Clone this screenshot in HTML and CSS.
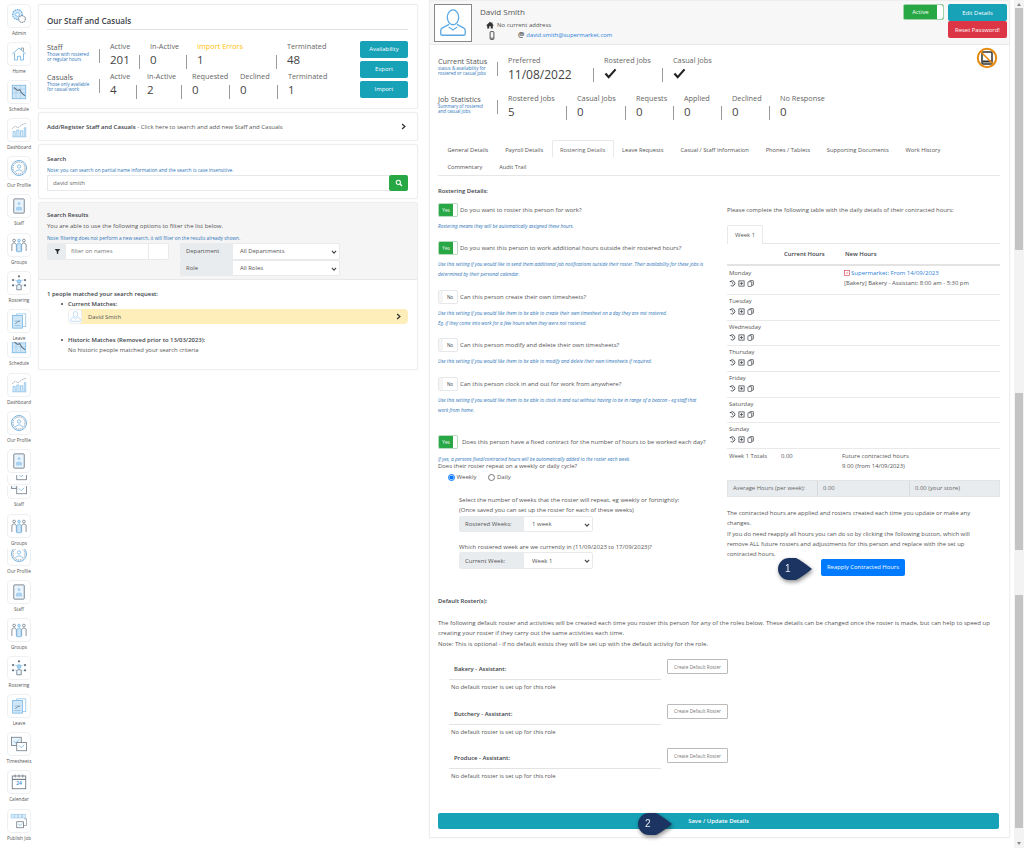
FILE: index.html
```html
<!DOCTYPE html>
<html lang="en">
<head>
<meta charset="utf-8">
<title>Our Staff and Casuals</title>
<link rel="stylesheet" href="styles.css">
</head>
<body>
<svg class="defs" aria-hidden="true">
  <defs>
    <symbol id="i-admin" viewBox="0 0 24 24"><circle cx="10" cy="10" r="6.5" fill="#d5e9f8" stroke="#6fb1e3" stroke-width="1.6" stroke-dasharray="2.4 .8"/><circle cx="10" cy="10" r="2.5" fill="#fff" stroke="#6fb1e3"/><circle cx="16" cy="16" r="4.5" fill="#fff" stroke="#7d8994" stroke-width="1.4" stroke-dasharray="2 .8"/></symbol>
    <symbol id="i-home" viewBox="0 0 24 24"><path d="M3 12 12 4l9 8M6 11v9h4v-5h4v5h4v-9" fill="none" stroke="#6fb1e3" stroke-width="1.1"/><path d="M15 7V4h3v5" fill="none" stroke="#7d8994"/></symbol>
    <symbol id="i-sched" viewBox="0 0 24 24"><rect x="3" y="3" width="18" height="18" fill="#cfe6f7" stroke="#6fb1e3"/><path d="M3 8h18M3 13h18M8 3v18M14 3v18" stroke="#8fc3ea" stroke-width=".6"/><path d="M5 6l5 4 3-1 3 5 4 3" fill="none" stroke="#66727d" stroke-width="1.4"/></symbol>
    <symbol id="i-dash" viewBox="0 0 24 24"><path d="M4 20v-6h3v6M9 20v-8h3v8M14 20v-7h3v7M19 20V9h2v11" fill="#e2f0fb" stroke="#6fb1e3" stroke-width=".8"/><path d="M3 21h19" stroke="#6fb1e3"/><path d="M3 10l4-3 4 2 5-4 5-2" fill="none" stroke="#7d8994" stroke-dasharray="2 1.2"/></symbol>
    <symbol id="i-prof" viewBox="0 0 24 24"><circle cx="12" cy="12" r="10" fill="none" stroke="#6fb1e3" stroke-width="1.3"/><circle cx="12" cy="12" r="8" fill="none" stroke="#7d8994" stroke-dasharray="2 1"/><circle cx="12" cy="10" r="2.2" fill="none" stroke="#6fb1e3"/><path d="M7 17q5-5 10 0" fill="none" stroke="#6fb1e3"/></symbol>
    <symbol id="i-staff" viewBox="0 0 24 24"><rect x="5" y="2.5" width="14" height="19" rx="1" fill="#eaf4fc" stroke="#66727d" stroke-width="1.1"/><circle cx="12" cy="8.5" r="2" fill="#a9d2f1"/><path d="M8 18v-4q4-3 8 0v4z" fill="#a9d2f1"/></symbol>
    <symbol id="i-group" viewBox="0 0 24 24"><g fill="none" stroke="#66727d"><circle cx="5.5" cy="6" r="1.8"/><circle cx="18.5" cy="6" r="1.8"/><path d="M2.500 20v-9l3-2 3 2v9M15.500 20v-9l3-2 3 2v9"/></g><g fill="#cfe6f7" stroke="#6fb1e3"><circle cx="12" cy="6" r="1.800"/><path d="M9 21v-10l3-2 3 2v10z"/></g></symbol>
    <symbol id="i-rost" viewBox="0 0 24 24"><g fill="#66727d"><circle cx="12" cy="3" r="1.500"/><circle cx="4" cy="8" r="1.500"/><circle cx="20" cy="8" r="1.500"/><circle cx="4" cy="15" r="1.500"/><circle cx="20" cy="15" r="1.500"/></g><circle cx="12" cy="10" r="2.500" fill="#a9d2f1" stroke="#6fb1e3"/><path d="M9 21v-6q3-2 6 0v6z" fill="#eaf4fc" stroke="#66727d"/><path d="M6 8l4 1M18 8l-4 1M6 15l3 0M18 15l-3 0" stroke="#6fb1e3" stroke-width=".6"/></symbol>
    <symbol id="i-leave" viewBox="0 0 24 24"><rect x="9" y="2.500" width="12" height="17" fill="#fff" stroke="#8fc3ea"/><rect x="3.500" y="4.500" width="13" height="17" fill="#cfe6f7" stroke="#6fb1e3"/><path d="M6 12h8M6 18h8" stroke="#6fb1e3" stroke-width=".8"/><path d="M7 16l3-3 3-1" fill="none" stroke="#66727d"/></symbol>
    <symbol id="i-time" viewBox="0 0 24 24"><rect x="2" y="3" width="13" height="11" fill="#eaf4fc" stroke="#66727d"/><path d="M5 8l3 3 4-5" fill="none" stroke="#6fb1e3"/><rect x="9" y="10" width="13" height="11" fill="#fff" stroke="#66727d"/><path d="M12 14l3 3 4-4" fill="none" stroke="#6fb1e3"/></symbol>
    <symbol id="i-cal" viewBox="0 0 24 24"><rect x="3" y="4" width="18" height="17" fill="#fff" stroke="#66727d" stroke-width="1.100"/><path d="M3 8.500h18" stroke="#66727d" stroke-width="1.400"/><path d="M7 2v4M12 2v4M17 2v4" stroke="#66727d"/></symbol>
    <symbol id="i-pub" viewBox="0 0 24 24"><g fill="#e2f0fb" stroke="#8fc3ea" stroke-width=".8"><rect x="1.500" y="3" width="4" height="5"/><rect x="6.500" y="3" width="4" height="5"/><rect x="11.500" y="3" width="4" height="5"/><rect x="16.500" y="3" width="4" height="5"/></g><path d="M19 9h3v9h-5" fill="none" stroke="#8c98a3"/><rect x="9" y="13" width="9" height="8" fill="#fff" stroke="#66727d"/><path d="M11 16l2.500 2 3-3" fill="none" stroke="#6fb1e3"/></symbol>
    <symbol id="i-history" viewBox="0 0 12 12"><path d="M2.500 2.500A4.500 4.500 0 1 1 3 9.500" fill="none" stroke="#3c434a" stroke-width="1.400"/><path d="M.5 1.500h3.500v3z" fill="#3c434a"/><path d="M6 3.500v3l2 1" fill="none" stroke="#3c434a"/></symbol>
    <symbol id="i-plus" viewBox="0 0 12 12"><rect x="1.500" y="1.500" width="9" height="9" fill="#eee" stroke="#3c434a" stroke-width="1.200"/><path d="M3.500 6h5M6 3.500v5" stroke="#3c434a" stroke-width="1.200"/></symbol>
    <symbol id="i-copy" viewBox="0 0 12 12"><rect x="4.500" y="1" width="6.500" height="8" rx="1" fill="#eee" stroke="#3c434a" stroke-width="1.200"/><rect x="1.500" y="3" width="6.500" height="8" rx="1" fill="#fff" stroke="#3c434a" stroke-width="1.200"/></symbol>
    <symbol id="i-chev" viewBox="0 0 10 10"><path d="M3 1.500 7 5 3 8.500" fill="none" stroke="#333" stroke-width="1.800"/></symbol>
    <symbol id="i-down" viewBox="0 0 10 10"><path d="M1.500 3 5 7l3.500-4" fill="none" stroke="#444" stroke-width="1.800"/></symbol>
    <symbol id="i-person" viewBox="0 0 32 32"><ellipse cx="16" cy="9.500" rx="6.500" ry="8.500" fill="none" stroke="currentColor" stroke-width="1.500"/><path d="M11.500 17.500 4 21.500q-2 1-2 3v4q0 1.500 2 1.500h24q2 0 2-1.500v-4q0-2-2-3l-7.500-4" fill="none" stroke="currentColor" stroke-width="1.500"/><path d="M11 20.500 16 24l5-3.500" fill="none" stroke="currentColor" stroke-width="1.200"/></symbol>
    <symbol id="i-check" viewBox="0 0 14 12"><path d="M1.500 6 5 10l7.500-8.500" fill="none" stroke="#222" stroke-width="2.400"/></symbol>
    <symbol id="i-pin" viewBox="0 0 34 23"><path d="M11 0h7q6 3 16 11-10 8-16 11h-7a11 11 0 0 1 0-22z" fill="#1c3461"/></symbol>
  </defs>
</svg>

<div class="page">
  <nav class="nav">
    <a class="nav-item"><span class="tile"><svg class="ni"><use href="#i-admin"/></svg></span><span class="nl">Admin</span></a>
    <a class="nav-item"><span class="tile"><svg class="ni"><use href="#i-home"/></svg></span><span class="nl">Home</span></a>
    <a class="nav-item"><span class="tile"><svg class="ni"><use href="#i-sched"/></svg></span><span class="nl">Schedule</span></a>
    <a class="nav-item"><span class="tile"><svg class="ni"><use href="#i-dash"/></svg></span><span class="nl">Dashboard</span></a>
    <a class="nav-item"><span class="tile"><svg class="ni"><use href="#i-prof"/></svg></span><span class="nl">Our Profile</span></a>
    <a class="nav-item"><span class="tile"><svg class="ni"><use href="#i-staff"/></svg></span><span class="nl">Staff</span></a>
    <a class="nav-item"><span class="tile"><svg class="ni"><use href="#i-group"/></svg></span><span class="nl">Groups</span></a>
    <a class="nav-item"><span class="tile"><svg class="ni"><use href="#i-rost"/></svg></span><span class="nl">Rostering</span></a>
    <a class="nav-item nav-short"><span class="tile"><svg class="ni"><use href="#i-leave"/></svg></span><span class="nl">Leave</span></a>
    <a class="nav-item nav-cut1"><span class="tile"><svg class="ni"><use href="#i-sched"/></svg></span><span class="nl">Schedule</span></a>
    <a class="nav-item"><span class="tile"><svg class="ni"><use href="#i-dash"/></svg></span><span class="nl">Dashboard</span></a>
    <a class="nav-item"><span class="tile"><svg class="ni"><use href="#i-prof"/></svg></span><span class="nl">Our Profile</span></a>
    <a class="nav-item nav-cut2"><span class="tile"><svg class="ni"><use href="#i-staff"/></svg></span></a>
    <a class="nav-item nav-cut3"><span class="tile"><svg class="ni"><use href="#i-time"/></svg></span></a>
    <a class="nav-item nav-cut4"><span class="tile"><svg class="ni"><use href="#i-time"/></svg></span><span class="nl">Staff</span></a>
    <a class="nav-item nav-cut6"><span class="tile"><svg class="ni"><use href="#i-group"/></svg></span><span class="nl">Groups</span></a>
    <a class="nav-item nav-cut5"><span class="tile"><svg class="ni"><use href="#i-prof"/></svg></span><span class="nl">Our Profile</span></a>
    <a class="nav-item"><span class="tile"><svg class="ni"><use href="#i-staff"/></svg></span><span class="nl">Staff</span></a>
    <a class="nav-item"><span class="tile"><svg class="ni"><use href="#i-group"/></svg></span><span class="nl">Groups</span></a>
    <a class="nav-item"><span class="tile"><svg class="ni"><use href="#i-rost"/></svg></span><span class="nl">Rostering</span></a>
    <a class="nav-item"><span class="tile"><svg class="ni"><use href="#i-leave"/></svg></span><span class="nl">Leave</span></a>
    <a class="nav-item"><span class="tile"><svg class="ni"><use href="#i-time"/></svg></span><span class="nl">Timesheets</span></a>
    <a class="nav-item"><span class="tile tile-cal"><svg class="ni"><use href="#i-cal"/></svg><span class="cal-day">24</span></span><span class="nl">Calendar</span></a>
    <a class="nav-item"><span class="tile"><svg class="ni"><use href="#i-pub"/></svg></span><span class="nl">Publish Job</span></a>
  </nav>

  <main class="left">
    <section class="card card-stats">
      <h2 class="title">Our Staff and Casuals</h2>
      <div class="stats-wrap">
        <div class="stats">
          <div class="srow">
            <div class="shead w-53"><div class="sname">Staff</div><div class="ssub">Those with rostered<br>or regular hours</div></div>
            <div class="stat w-40"><div class="slabel">Active</div><div class="sval">201</div></div>
            <div class="stat w-47"><div class="slabel">In-Active</div><div class="sval">0</div></div>
            <div class="stat w-90"><div class="slabel orange">Import Errors</div><div class="sval">1</div></div>
            <div class="stat"><div class="slabel">Terminated</div><div class="sval">48</div></div>
          </div>
          <div class="srow">
            <div class="shead w-53"><div class="sname">Casuals</div><div class="ssub">Those only available<br>for casual work</div></div>
            <div class="stat w-37"><div class="slabel">Active</div><div class="sval">4</div></div>
            <div class="stat w-45"><div class="slabel">In-Active</div><div class="sval">2</div></div>
            <div class="stat w-48"><div class="slabel">Requested</div><div class="sval">0</div></div>
            <div class="stat w-48"><div class="slabel">Declined</div><div class="sval">0</div></div>
            <div class="stat"><div class="slabel">Terminated</div><div class="sval">1</div></div>
          </div>
        </div>
        <div class="sbtns">
          <button class="btn teal sbtn">Availability</button>
          <button class="btn teal sbtn">Export</button>
          <button class="btn teal sbtn">Import</button>
        </div>
      </div>
    </section>

    <section class="card card-add">
      <span><b>Add/Register Staff and Casuals</b> - Click here to search and add new Staff and Casuals</span>
      <svg class="chev"><use href="#i-chev"/></svg>
    </section>

    <section class="card card-search">
      <div class="bold lh10">Search</div>
      <div class="note up">Note: you can search on partial name information and the search is case insensitive.</div>
      <div class="searchbar">
        <div class="field">david smith</div>
        <button class="btn green sgo"><svg viewBox="0 0 12 12" class="mag"><circle cx="5" cy="5" r="3.200" fill="none" stroke="#fff" stroke-width="1.600"/><path d="M7.500 7.500 10.500 10.500" stroke="#fff" stroke-width="1.800"/></svg></button>
      </div>
    </section>

    <section class="card card-results">
      <div class="rhead">
        <div class="bold lh10">Search Results</div>
        <div class="rintro">You are able to use the following options to filter the list below.</div>
        <div class="note up">Note: filtering does not perform a new search, it will filter on the results already shown.</div>
        <div class="filters">
          <div class="igroup fname">
            <span class="addon ficon"><svg viewBox="0 0 10 10" class="funnel"><path d="M1 1.500h8L6 5.500V9L4 8V5.500z" fill="#333"/></svg></span>
            <span class="ival ph">filter on names</span>
            <span class="iextra"></span>
          </div>
          <div class="selects">
            <div class="igroup"><span class="addon lab52">Department</span><span class="ival sel">All Departments<svg class="dn"><use href="#i-down"/></svg></span></div>
            <div class="igroup"><span class="addon lab52">Role</span><span class="ival sel">All Roles<svg class="dn"><use href="#i-down"/></svg></span></div>
          </div>
        </div>
      </div>
      <div class="rbody">
        <div class="bold lh10">1 people matched your search request:</div>
        <ul class="rlist">
          <li class="bold">Current Matches:
            <div class="match"><span class="mavatar"><svg class="mperson"><use href="#i-person"/></svg></span><span class="mname">David Smith</span><svg class="chev"><use href="#i-chev"/></svg></div>
          </li>
          <li class="hist"><span class="bold">Historic Matches (Removed prior to 13/03/2023):</span>
            <div class="nohist">No historic people matched your search criteria</div>
          </li>
        </ul>
      </div>
    </section>
  </main>

  <article class="right">
    <header class="phead">
      <div class="avatar"><svg class="aperson"><use href="#i-person"/></svg></div>
      <div class="pinfo">
        <div class="pname">David Smith</div>
        <div class="paddr"><svg viewBox="0 0 10 10" class="hicon"><path d="M5 1 0 5.500h1.500V9.500h2.500V6.500h2V9.500h2.500V5.500H10L8 3.700V1.500H7V2.800z" fill="#333"/></svg>No current address</div>
        <div class="pcontact"><svg viewBox="0 0 8 12" class="phone"><rect x="1.500" y=".8" width="5" height="10.400" rx="1" fill="none" stroke="#333" stroke-width="1.100"/><path d="M2 9.500h4" stroke="#333"/></svg><span class="at">@</span><a class="link">david.smith@supermarket.com</a></div>
      </div>
      <div class="pbtns">
        <div class="toggle-on big"><span>Active</span><i></i></div>
        <div class="pstack"><button class="btn teal pbtn">Edit Details</button><button class="btn red pbtn">Reset Password!</button></div>
      </div>
    </header>

    <div class="pbody">
      <div class="nodevice"><svg viewBox="0 0 22 22" class="ndicon"><rect x="6" y="5" width="10" height="12" rx="1" fill="#fff" stroke="#333" stroke-width="1.500"/><path d="M6.500 14.500h9" stroke="#333" stroke-width="2"/><circle cx="11" cy="11" r="9.200" fill="none" stroke="#e58a0e" stroke-width="2"/><path d="M5 5l12 12" stroke="#e58a0e" stroke-width="1.600"/></svg></div>

      <div class="jrow jrow1">
        <div class="shead w-59"><div class="sname">Current Status</div><div class="ssub">status &amp; availability for<br>rostered or casual jobs</div></div>
        <div class="stat w-96"><div class="slabel">Preferred</div><div class="sval">11/08/2022</div></div>
        <div class="stat w-69"><div class="slabel">Rostered Jobs</div><svg class="tick"><use href="#i-check"/></svg></div>
        <div class="stat"><div class="slabel">Casual Jobs</div><svg class="tick"><use href="#i-check"/></svg></div>
      </div>
      <div class="jrow jrow2">
        <div class="shead w-59"><div class="sname">Job Statistics</div><div class="ssub">Summary of rostered<br>and casual jobs</div></div>
        <div class="stat w-69"><div class="slabel">Rostered Jobs</div><div class="sval">5</div></div>
        <div class="stat w-59"><div class="slabel">Casual Jobs</div><div class="sval">0</div></div>
        <div class="stat w-48"><div class="slabel">Requests</div><div class="sval">0</div></div>
        <div class="stat w-48"><div class="slabel">Applied</div><div class="sval">0</div></div>
        <div class="stat w-48"><div class="slabel">Declined</div><div class="sval">0</div></div>
        <div class="stat"><div class="slabel">No Response</div><div class="sval">0</div></div>
      </div>

      <div class="tabs">
        <div class="tabrow">
          <span class="tab">General Details</span>
          <span class="tab">Payroll Details</span>
          <span class="tab active">Rostering Details</span>
          <span class="tab">Leave Requests</span>
          <span class="tab">Casual / Staff Information</span>
          <span class="tab">Phones / Tablets</span>
          <span class="tab">Supporting Documents</span>
          <span class="tab">Work History</span>
        </div>
        <div class="tabrow">
          <span class="tab">Commentary</span>
          <span class="tab">Audit Trail</span>
        </div>
      </div>

      <div class="cols">
        <div class="colL">
          <div class="bold lh10">Rostering Details:</div>
          <div class="settings">
            <div class="setting">
              <div class="qrow"><span class="sw on"><b>Yes</b><i></i></span><span>Do you want to roster this person for work?</span></div>
              <div class="hint">Rostering means they will be automatically assigned these hours.</div>
            </div>
            <div class="setting">
              <div class="qrow"><span class="sw on"><b>Yes</b><i></i></span><span>Do you want this person to work additional hours outside their rostered hours?</span></div>
              <div class="hint">Use this setting if you would like to send them additional job notifications outside their roster. Their availability for these jobs is determined by their personal calendar.</div>
            </div>
            <div class="setting">
              <div class="qrow"><span class="sw off"><i></i><b>No</b></span><span>Can this person create their own timesheets?</span></div>
              <div class="hint">Use this setting if you would like them to be able to create their own timesheet on a day they are not rostered.<br>Eg. if they come into work for a few hours when they were not rostered.</div>
            </div>
            <div class="setting">
              <div class="qrow"><span class="sw off"><i></i><b>No</b></span><span>Can this person modify and delete their own timesheets?</span></div>
              <div class="hint">Use this setting if you would like them to be able to modify and delete their own timesheets if required.</div>
            </div>
            <div class="setting">
              <div class="qrow"><span class="sw off"><i></i><b>No</b></span><span>Can this person clock in and out for work from anywhere?</span></div>
              <div class="hint">Use this setting if you would like them to be able to clock in and out without having to be in range of a beacon - eg staff that work from home.</div>
            </div>
            <div class="setting fixed">
              <div class="qrow q6"><span class="sw on"><b>Yes</b><i></i></span><span>Does this person have a fixed contract for the number of hours to be worked each day?</span></div>
              <div class="hint h6">If yes, a persons fixed/contracted hours will be automatically added to the roster each week.</div>
            </div>
          </div>
          <div class="lh10">Does their roster repeat on a weekly or daily cycle?</div>
          <div class="radios">
            <label class="radio"><input type="radio" name="cycle" checked>Weekly</label>
            <label class="radio"><input type="radio" name="cycle">Daily</label>
          </div>
          <div class="indent">
            <div class="lh10">Select the number of weeks that the roster will repeat, eg weekly or fortnightly:</div>
            <div class="lh10">(Once saved you can set up the roster for each of these weeks)</div>
            <div class="igroup wk"><span class="addon lab64">Rostered Weeks:</span><span class="ival sel selw">1 week<svg class="dn"><use href="#i-down"/></svg></span></div>
            <div class="lh10 which">Which rostered week are we currently in (11/09/2023 to 17/09/2023)?</div>
            <div class="igroup wk wk2"><span class="addon lab64">Current Week:</span><span class="ival sel selw">Week 1<svg class="dn"><use href="#i-down"/></svg></span></div>
          </div>
        </div>

        <div class="colR">
          <div class="lh10">Please complete the following table with the daily details of their contracted hours:</div>
          <div class="wtabs"><span class="wtab">Week 1</span></div>
          <div class="grow ghead"><span></span><b class="gcur">Current Hours</b><b class="gnew">New Hours</b></div>
          <div class="grow gmon">
            <div class="day">Monday<div class="acts"><svg><use href="#i-history"/></svg><svg><use href="#i-plus"/></svg><svg><use href="#i-copy"/></svg></div></div>
            <span></span>
            <div class="gnewc"><div class="sup"><svg viewBox="0 0 10 10" class="minus"><rect x="1" y="1" width="8" height="8" fill="#fff" stroke="#dc3545"/><path d="M3 5h4" stroke="#dc3545"/></svg><span class="link">Supermarket: From 14/09/2023</span></div><div class="sup2">[Bakery] Bakery - Assistant: 8:00 am - 5:30 pm</div></div>
          </div>
          <div class="grow gday"><div class="day">Tuesday<div class="acts"><svg><use href="#i-history"/></svg><svg><use href="#i-plus"/></svg><svg><use href="#i-copy"/></svg></div></div></div>
          <div class="grow gday"><div class="day">Wednesday<div class="acts"><svg><use href="#i-history"/></svg><svg><use href="#i-plus"/></svg><svg><use href="#i-copy"/></svg></div></div></div>
          <div class="grow gday"><div class="day">Thursday<div class="acts"><svg><use href="#i-history"/></svg><svg><use href="#i-plus"/></svg><svg><use href="#i-copy"/></svg></div></div></div>
          <div class="grow gday"><div class="day">Friday<div class="acts"><svg><use href="#i-history"/></svg><svg><use href="#i-plus"/></svg><svg><use href="#i-copy"/></svg></div></div></div>
          <div class="grow gday"><div class="day">Saturday<div class="acts"><svg><use href="#i-history"/></svg><svg><use href="#i-plus"/></svg><svg><use href="#i-copy"/></svg></div></div></div>
          <div class="grow gday"><div class="day">Sunday<div class="acts"><svg><use href="#i-history"/></svg><svg><use href="#i-plus"/></svg><svg><use href="#i-copy"/></svg></div></div></div>
          <div class="grow gtot"><span class="day">Week 1 Totals</span><span class="tv">0.00</span><div class="gnewc">Future contracted hours<br>9.00 (from 14/09/2023)</div></div>
          <div class="avg"><span class="a1">Average Hours (per week):</span><span class="a2">0.00</span><span class="a3">0.00 (your store)</span></div>
          <p class="contract">The contracted hours are applied and rosters created each time you update or make any changes.<br>If you do need reapply all hours you can do so by clicking the following button, which will remove ALL future rosters and adjustments for this person and replace with the set up contracted hours.</p>
          <div class="reapply"><div class="pin pin1"><svg><use href="#i-pin"/></svg><span>1</span></div><button class="btn blue rbtn">Reapply Contracted Hours</button></div>
        </div>
      </div>

      <section class="defaults">
        <div class="bold lh10">Default Roster(s):</div>
        <p class="dpara">The following default roster and activities will be created each time you roster this person for any of the roles below. These details can be changed once the roster is made, but can help to speed up creating your roster if they carry out the same activities each time.<br>Note: This is optional - if no default exists they will be set up with the default activity for the role.</p>
        <div class="role"><div class="rmain"><b class="rtitle">Bakery - Assistant:</b><div class="rnone">No default roster is set up for this role</div></div><button class="cbtn">Create Default Roster</button></div>
        <div class="role"><div class="rmain"><b class="rtitle">Butchery - Assistant:</b><div class="rnone">No default roster is set up for this role</div></div><button class="cbtn">Create Default Roster</button></div>
        <div class="role"><div class="rmain"><b class="rtitle">Produce - Assistant:</b><div class="rnone">No default roster is set up for this role</div></div><button class="cbtn">Create Default Roster</button></div>
      </section>

      <div class="savewrap"><button class="btn teal save">Save / Update Details</button><div class="pin pin2"><svg><use href="#i-pin"/></svg><span>2</span></div></div>
    </div>
  </article>

  <div class="sbar">
    <div class="sarrow up-a"></div>
    <div class="thumb th1"></div>
    <div class="thumb th2"></div>
    <div class="thumb th3"></div>
    <div class="sarrow dn-a"></div>
  </div>
</div>
</body>
</html>
```

FILE: styles.css
```css
* { box-sizing: border-box; }
html, body { margin: 0; padding: 0; }
body {
  width: 1024px; height: 848px; overflow: hidden; background: #fff;
  font-family: "Open Sans", "Liberation Sans", sans-serif;
  font-size: 5.9px; line-height: 10px; color: #555;
}
.defs { width: 0; height: 0; position: absolute; }
button { font-family: inherit; margin: 0; cursor: pointer; }
p { margin: 0; }
b, .bold { font-weight: 600; color: #3d434a; }
.lh10 { line-height: 10px; }
.page { display: flex; width: 1024px; height: 848px; align-items: flex-start; }

/* sidebar */
.nav { width: 38px; flex: none; display: flex; flex-direction: column; padding-top: 4px; }
.nav-item { display: flex; flex-direction: column; align-items: center; height: 38.1px; overflow: hidden; flex: none; }
.tile { display: flex; align-items: center; justify-content: center; width: 24px; height: 24px; flex: none; border: 1px solid #eef0f2; border-radius: 4px; background: #fff; position: relative; }
.ni { width: 18px; height: 18px; }
.nl { font-size: 4.7px; line-height: 9px; margin-top: 1px; color: #555; white-space: nowrap; }
.cal-day { position: absolute; top: 9px; left: 0; right: 0; text-align: center; font-size: 5px; line-height: 7px; color: #2f86cf; font-weight: 600; }
.nav-short { height: 33px; }
.nav-cut1 { height: 31px; }
.nav-cut1 .tile { margin-top: -8px; }
.nav-cut2 { height: 26px; }
.nav-cut3 { height: 11px; }
.nav-cut3 .tile { margin-top: -14px; }
.nav-cut4 { height: 28px; }
.nav-cut4 .tile { margin-top: -11px; }
.nav-cut6 { height: 35px; }
.nav-cut5 { height: 31px; }
.nav-cut5 .tile { margin-top: -7px; }

/* left column */
.left { width: 380px; flex: none; display: flex; flex-direction: column; gap: 3px; padding-top: 4px; }
.card { background: #fff; border: 1px solid #eee; border-radius: 2px; box-shadow: 0 0 2px rgba(0,0,0,.05); }
.card-stats { height: 105px; padding: 10px 9px 0 8px; }
.title { margin: 0; font-size: 8.100px; line-height: 11px; font-weight: 600; color: #3d434a; padding-bottom: 3px; border-bottom: 1px solid #dfe2e5; height: 15px; }
.stats-wrap { display: flex; justify-content: space-between; padding-top: 11px; }
.srow { display: flex; height: 28px; margin-bottom: 2px; }
.shead { flex: none; border-right: 1px solid #9a9a9a; height: 14px; margin-top: 8px; white-space: nowrap; position: relative; }
.sname { position: absolute; left: 0; top: -7px; font-size: 7.300px; line-height: 10px; color: #555; }
.ssub { position: absolute; left: 0; top: 3px; font-size: 4.500px; line-height: 5.200px; color: #2c74b8; }
.stat { flex: none; position: relative; padding-left: 10px; white-space: nowrap; }
.slabel { font-size: 7.300px; line-height: 10px; color: #666; }
.sval { font-size: 11.500px; line-height: 16px; color: #444; padding-top: 1px; }
.orange { color: #ffc107; }
.w-37 { width: 37px; } .w-40 { width: 40px; } .w-45 { width: 45px; } .w-47 { width: 47px; }
.w-48 { width: 48px; } .w-53 { width: 53px; } .w-59 { width: 59px; } .w-69 { width: 69px; }
.w-90 { width: 90px; } .w-96 { width: 96px; }
.stat.w-37, .stat.w-40, .stat.w-45, .stat.w-47, .stat.w-48, .stat.w-59, .stat.w-69, .stat.w-90, .stat.w-96 { background: linear-gradient(#9a9a9a,#9a9a9a) right 14px / 1px 14px no-repeat; }
.sbtns { display: flex; flex-direction: column; gap: 3.500px; }
.btn { border: 0; border-radius: 2px; color: #fff; font-size: 5.9px; line-height: 10px; padding: 0; }
.teal { background: #17a2b8; } .green { background: #28a745; } .red { background: #dc3545; } .blue { background: #007bff; }
.sbtn { width: 48px; height: 16.500px; }
.card-add { height: 29px; padding: 0 10px 0 8px; display: flex; align-items: center; justify-content: space-between; font-size: 6px; }
.chev { width: 7px; height: 7px; flex: none; }
.card-search { height: 55px; padding: 9px 9px 0 8px; }
.note { font-size: 4.780px; line-height: 6px; color: #2c74b8; }
.note.up { margin-top: 3px; }
.searchbar { display: flex; height: 16px; margin-top: 2px; }
.field { flex: 1; border: 1px solid #e6e8ea; border-right: 0; padding-left: 5px; line-height: 14px; color: #666; }
.sgo { width: 19px; display: flex; align-items: center; justify-content: center; }
.mag { width: 8px; height: 8px; }
.card-results { height: 168px; }
.rhead { height: 77px; background: #f5f5f5; border-bottom: 1px solid #e8e8e8; padding: 7px 0 0 8px; }
.rintro { font-size: 6px; line-height: 12px; }
.filters { display: flex; gap: 11px; margin-top: 2px; }
.igroup { display: flex; height: 16.500px; background: #fff; border: 1px solid #e8eaec; border-radius: 2px; }
.addon { background: #e9ecef; display: flex; align-items: center; padding-left: 5px; color: #555; flex: none; }
.ival { display: flex; align-items: center; padding-left: 7px; flex: 1; color: #555; }
.ph { color: #777; padding-left: 5px; }
.fname { width: 122px; }
.ficon { width: 18px; padding-left: 6px; }
.funnel { width: 7px; height: 7px; }
.iextra { width: 20px; border-left: 1px solid #e8eaec; }
.selects { width: 160px; display: flex; flex-direction: column; }
.lab52 { width: 52px; }
.sel { position: relative; justify-content: flex-start; }
.dn { position: absolute; right: 2px; top: 5px; width: 6px; height: 6px; }
.rbody { padding: 9px 9px 0 8px; }
.rlist { margin: 0; padding: 0 0 0 21px; list-style: none; }
.rlist li { position: relative; }
.rlist li::before { content: ""; position: absolute; left: -7px; top: 4px; width: 2px; height: 2px; border-radius: 50%; background: #444; }
.match { display: flex; align-items: center; height: 15px; background: #fdeeba; border-radius: 4px; margin-top: 0; font-weight: 400; color: #555; }
.mavatar { width: 14px; height: 15px; background: #fff; border: 1px solid #eee; border-radius: 3px; display: flex; align-items: center; justify-content: center; color: #8ec3ec; }
.mperson { width: 11px; height: 11px; }
.mname { flex: 1; padding-left: 6px; }
.match .chev { margin-right: 6px; }
.hist { margin-top: 11px; }
.nohist { font-weight: 400; color: #555; }

/* right column */
.right { width: 581px; height: 838px; flex: none; margin-left: 11px; border: 1px solid #eee; box-shadow: 0 0 2px rgba(0,0,0,.05); background: #fff; display: flex; flex-direction: column; position: relative; }
.phead { height: 44px; flex: none; background: #f7f7f7; border-bottom: 1px solid #e9e9e9; display: flex; padding: 3px 2px 0 4px; }
.avatar { width: 38px; height: 38px; flex: none; border: 1px solid #888; background: #fff; display: flex; align-items: center; justify-content: center; color: #5aa9e6; }
.aperson { width: 28px; height: 32px; }
.pinfo { padding-left: 8px; flex: 1; }
.pname { font-size: 8px; line-height: 10px; color: #555; padding-top: 3px; height: 13px; }
.paddr { display: flex; align-items: center; height: 11px; padding-left: 6px; margin-top: 2px; font-size: 6px; color: #555; }
.hicon { width: 8px; height: 8px; margin-right: 3px; }
.pcontact { display: flex; align-items: center; height: 10px; padding-left: 9px; font-size: 5.900px; }
.phone { width: 6px; height: 9px; margin-right: 23px; }
.at { font-size: 7px; color: #333; margin-right: 2px; font-weight: 600; }
.link { color: #2a7fd9; }
.pbtns { display: flex; gap: 4px; flex: none; }
.toggle-on { background: #28a745; color: #fff; display: flex; border: 1px solid #9ed2ab; border-radius: 2px; width: 41px; height: 16px; }
.toggle-on span { flex: 1; text-align: center; line-height: 14px; }
.toggle-on i { width: 6px; background: #fff; border-radius: 0 2px 2px 0; }
.pstack { display: flex; flex-direction: column; }
.pbtn { width: 59px; height: 17px; }
.pbody { flex: 1; padding: 0 9px 0 8px; position: relative; }
.nodevice { position: absolute; right: 11px; top: 2px; width: 22px; height: 22px; }
.ndicon { width: 22px; height: 22px; display: block; }
.jrow { display: flex; height: 28px; }
.jrow1 { margin-top: 10px; }
.jrow2 { margin-top: 10px; }
.jrow .shead { margin-top: 7px; }
.jrow .sname { top: -6px; }
.jrow .ssub { top: 4px; }
.jrow .stat.w-59, .jrow .stat.w-69, .jrow .stat.w-96, .jrow .stat.w-48 { background-position: right 13px; }
.jrow .shead.w-59 { width: 60px; }
.jrow .sval { padding-top: 1px; }
.jrow1 .sval { font-size: 12px; padding-top: 2px; }
.tick { display: block; width: 13px; height: 11px; margin-top: 3px; }
.tabs { border-bottom: 1px solid #e6e6e6; padding-left: 1px; height: 36px; margin-top: 19px; }
.tabrow { display: flex; height: 17px; }
.tabrow + .tabrow { height: 18px; }
.tab { padding: 0 7.400px; line-height: 18px; font-size: 5.750px; color: #555; border: 1px solid transparent; border-bottom: 0; white-space: nowrap; }
.tab.active { border-color: #e9e9e9; color: #666; background: #fff; border-radius: 2px 2px 0 0; }
.cols { display: flex; gap: 12px; padding-top: 10px; }
.colL { width: 277px; flex: none; }
.colR { width: 273px; flex: none; padding-top: 19px; }
.settings { display: flex; flex-direction: column; gap: 10.400px; padding-top: 7px; }
.qrow { display: flex; align-items: center; gap: 2px; font-size: 6px; height: 14px; }
.q6 { gap: 4px; }
.sw { display: flex; width: 20px; height: 14px; flex: none; border: 1px solid #e6e8ea; border-radius: 2px; font-size: 4.600px; line-height: 12px; }
.sw b { flex: 1; text-align: center; font-weight: 400; }
.sw i { width: 4px; background: #fff; }
.sw.on { background: #28a745; border-color: #b6dcc0; }
.sw.on b { color: #fff; }
.sw.off { background: #fff; }
.sw.off i { background: #f5f5f5; }
.hint { font-size: 4.750px; line-height: 10px; font-style: italic; color: #2c74b8; margin-top: 4px; max-width: 268px; }
.fixed { margin-top: 10px; }
.h6 { margin-top: 5px; height: 7px; max-width: none; }
.radios { display: flex; gap: 12px; padding: 1px 0 0 10px; height: 12px; align-items: center; font-size: 6px; }
.radio { display: flex; align-items: center; gap: 1.500px; }
.radio input { width: 7px; height: 7px; margin: 0; accent-color: #0075ff; }
.indent { padding: 12px 0 0 21px; font-size: 6px; }
.wk { width: 134px; margin-top: 1px; }
.wk2 { margin-top: 0; }
.lab64 { width: 64px; font-size: 6px; }
.selw { padding-left: 8px; }
.which { margin-top: 10px; }

.wtabs { border-bottom: 1px solid #e6e6e6; height: 19px; margin-top: 10px; }
.wtab { display: inline-block; width: 36px; height: 19px; border: 1px solid #e9e9e9; border-bottom: 0; line-height: 18px; text-align: center; background: #fff; border-radius: 2px 2px 0 0; }
.grow { display: grid; grid-template-columns: 54px 61px 1fr; border-bottom: 1px solid #e9e9e9; padding-left: 2px; }
.ghead { height: 22px; align-items: center; border-bottom: 2px solid #e3e3e3; }
.gcur { padding-left: 1px; }
.gnew { padding-left: 1px; }
.gmon { height: 29px; padding-top: 2px; }
.gday { height: 25.700px; padding-top: 1px; }
.day { white-space: nowrap; grid-column: 1; }
.acts { display: flex; gap: 2px; height: 9px; align-items: center; margin-top: 1px; }
.acts svg { width: 7px; height: 7px; }
.sup { display: flex; align-items: center; gap: 1px; height: 10px; font-size: 6px; }
.minus { width: 6px; height: 6px; }
.sup2 { white-space: nowrap; line-height: 11px; }
.gtot { border: 0; height: 31px; padding-top: 2px; grid-template-columns: 52px 61px 1fr; }
.avg { display: flex; height: 17px; background: #e9ecef; border: 1px solid #e2e4e6; line-height: 15px; color: #666; }
.a1 { width: 90px; padding-left: 5px; border-right: 1px solid #d8dadc; flex: none; }
.a2 { width: 92px; padding-left: 5px; border-right: 1px solid #d8dadc; flex: none; }
.a3 { padding-left: 5px; }
.contract { margin-top: 11px; line-height: 10.300px; font-size: 5.900px; max-width: 262px; }
.reapply { padding: 0 0 0 94px; margin-top: -1px; position: relative; }
.rbtn { width: 84px; height: 17px; }
.pin { position: absolute; width: 34px; height: 23px; color: #fff; filter: drop-shadow(1px 2px 2px rgba(0,0,0,.45)); }
.pin svg { width: 34px; height: 23px; display: block; }
.pin span { position: absolute; left: 7px; top: 5px; font: 10px/12px "Liberation Sans", sans-serif; color: #e8edf5; }
.pin1 { left: 51px; top: -1px; }
.pin2 { left: 200px; top: 0; }
.defaults { margin-top: 20px; }
.dpara { font-size: 6.060px; line-height: 10.500px; margin: 12px 0 10px; }
.role { display: flex; gap: 6px; padding-left: 11px; height: 44.500px; }
.rmain { width: 212px; }
.rtitle { display: block; height: 21px; border-bottom: 1px solid #e3e3e3; padding: 5px 0 0 5px; }
.rnone { padding-left: 2px; line-height: 14px; }
.cbtn { width: 61px; height: 15px; background: #fff; border: 1px solid #bbb; border-radius: 1px; font-size: 4.700px; color: #777; padding: 0; }
.savewrap { position: relative; margin-top: 20px; }
.save { width: 561px; height: 16px; display: block; font-weight: 600; }

/* scrollbar */
.sbar { width: 10px; height: 848px; flex: none; margin-left: 4px; background: #f3f3f3; position: relative; display: flex; flex-direction: column; align-items: center; padding-top: 8px; }
.thumb { width: 8px; background: #c4c4c4; flex: none; }
.th1 { height: 242px; }
.th2 { height: 157px; margin-top: 143px; }
.th3 { height: 233px; margin-top: 45px; }
.sarrow { position: absolute; left: 3px; width: 0; height: 0; border-left: 2px solid transparent; border-right: 2px solid transparent; }
.up-a { top: 3px; border-bottom: 3px solid #888; }
.dn-a { bottom: 3px; border-top: 3px solid #888; }
```
